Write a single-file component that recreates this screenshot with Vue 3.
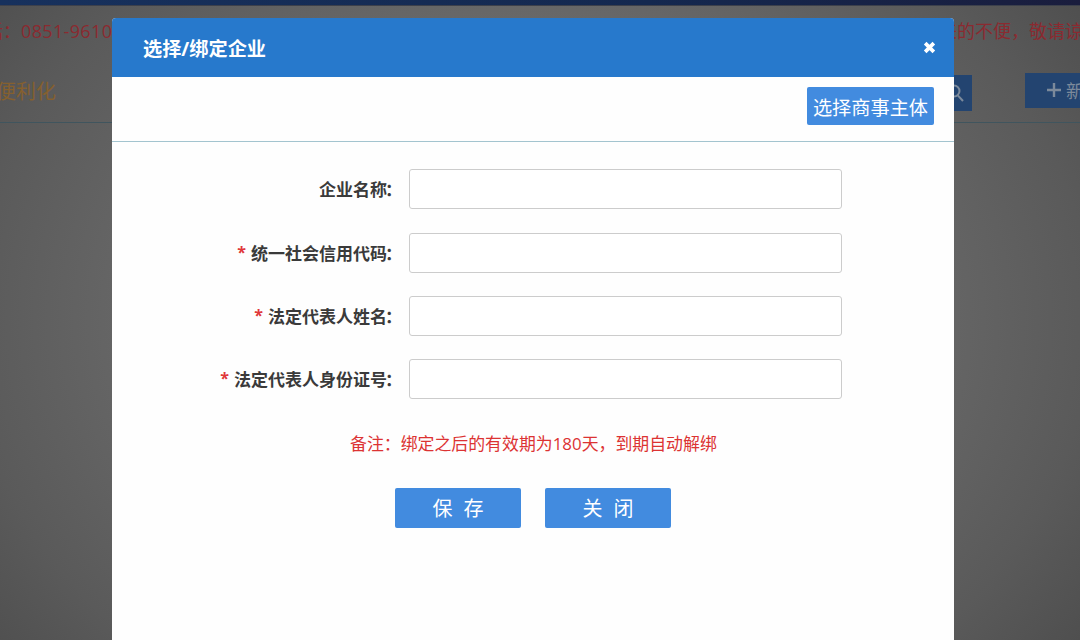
<script setup>
import { ref } from 'vue';

const campos = ref([
  { id: 'name', label: '企业名称', required: false, value: '' },
  { id: 'code', label: '统一社会信用代码', required: true, value: '' },
  { id: 'legal', label: '法定代表人姓名', required: true, value: '' },
  { id: 'idcard', label: '法定代表人身份证号', required: true, value: '' },
]);

const visible = ref(true);

const cerrar = () => {
  visible.value = false;
};
</script>

<template>
  <div class="screen">
    <div class="page">
      <div class="topbar"></div>
      <div class="columns notice">
        <span class="phone">话：<b>0851-9610</b></span>
        <span class="sorry">来的不便，敬请谅解</span>
      </div>
      <div class="columns toolbar">
        <span class="slogan">便利化</span>
        <div class="actions">
          <button class="search">
            <svg width="18" height="20" viewBox="0 0 18 20">
              <circle cx="7" cy="8" r="5.5" />
              <path d="M10.8 12.3L16 18" />
            </svg>
          </button>
          <button class="add">
            <svg width="16" height="16" viewBox="0 0 16 16"><path d="M8 1v14M1 8h14" /></svg>
            <span>新增</span>
          </button>
        </div>
      </div>
    </div>

    <div v-if="visible" class="modal">
      <div class="modal-head">
        <h3>选择/绑定企业</h3>
        <button class="close" @click="cerrar">
          <svg width="13" height="13" viewBox="0 0 12 12"><path d="M2 2l8 8M10 2l-8 8" /></svg>
        </button>
      </div>
      <div class="modal-tools">
        <button class="choose">选择商事主体</button>
      </div>
      <form class="form" @submit.prevent>
        <div v-for="campo in campos" :key="campo.id" class="row">
          <label :for="campo.id"><i v-if="campo.required">*</i>{{ campo.label }}<span class="colon">：</span></label>
          <input :id="campo.id" v-model="campo.value" type="text" />
        </div>
        <p class="remark">备注：绑定之后的有效期为180天，到期自动解绑</p>
        <div class="buttons">
          <button type="submit"><span>保</span><span>存</span></button>
          <button type="button" @click="cerrar"><span>关</span><span>闭</span></button>
        </div>
      </form>
    </div>
  </div>
</template>

<style>
body {
  margin: 0;
  overflow: hidden;
}
</style>

<style scoped>
.screen {
  position: relative;
  width: 1080px;
  height: 640px;
  overflow: hidden;
  font-family: "Open Sans", "Noto Sans CJK SC", sans-serif;
  background: radial-gradient(ellipse 720px 580px at 49% 50%, #707070 0%, #696969 50%, #5a5a5a 78%, #4b4b4b 100%);
}

button {
  display: flex;
  align-items: center;
  justify-content: center;
  padding: 0;
  border: 0;
  font-family: inherit;
  color: #fff;
  background: #428bdf;
  white-space: nowrap;
}

svg {
  fill: none;
  stroke: currentColor;
}

.topbar {
  height: 5px;
  background: linear-gradient(90deg, #17315d, #14284f 60%, #1a1d3d);
  border-bottom: 1px solid #3c404b;
}

.columns {
  display: grid;
  grid-template-columns: 112px 842px 126px;
  white-space: nowrap;
}

.notice {
  height: 48px;
  align-items: center;
  font-size: 18px;
  color: #8b2a30;
}

.phone {
  margin-left: -15px;
}

.phone b {
  font-weight: 400;
  letter-spacing: 0.35px;
}

.sorry {
  grid-column: 3;
  margin-left: -15px;
}

.toolbar {
  height: 68px;
  align-items: center;
  border-bottom: 1px solid #40555e;
}

.slogan {
  margin-left: -4px;
  padding-top: 4px;
  font-size: 20px;
  color: #85602f;
}

.actions {
  grid-column: 3;
  display: flex;
  gap: 53px;
  margin-left: -20px;
  padding-top: 5px;
}

.search,
.add {
  flex: none;
  color: #7c8a9b;
  background: #234470;
}

.search {
  width: 38px;
  height: 36px;
  margin-top: 4px;
}

.search svg {
  margin-left: 5px;
  stroke-width: 2;
}

.add {
  width: 98px;
  height: 35px;
  gap: 4px;
  margin-top: 2px;
  font-size: 18px;
}

.add svg {
  stroke-width: 2.4;
}

.modal {
  position: absolute;
  top: 18px;
  left: 112px;
  width: 842px;
  height: 640px;
  border-radius: 4px 4px 0 0;
  overflow: hidden;
  background: #fefefe;
}

.modal-head {
  display: flex;
  align-items: center;
  justify-content: space-between;
  height: 59px;
  padding: 0 18px 0 31px;
  color: #fff;
  background: #2779cc;
}

.modal-head h3 {
  margin: 2px 0 0;
  font-size: 19.2px;
  line-height: 28px;
}

.close {
  background: none;
}

.close svg {
  stroke-width: 3.4;
}

.modal-tools {
  display: flex;
  justify-content: flex-end;
  height: 64px;
  padding-right: 20px;
  border-bottom: 1px solid #a3c4cf;
}

.choose {
  width: 127px;
  height: 38px;
  margin-top: 10px;
  padding-top: 1px;
  box-sizing: border-box;
  border-radius: 2px;
  font-size: 19.2px;
}

.form {
  display: flex;
  flex-direction: column;
  gap: 23.3px;
  padding-top: 27.4px;
}

.row {
  display: flex;
  align-items: center;
  gap: 5px;
  height: 40px;
}

.row label {
  width: 292px;
  padding-bottom: 1px;
  text-align: right;
  font-size: 17px;
  font-weight: 700;
  color: #3a3a3a;
}

.row i {
  margin-right: 5px;
  font-size: 16px;
  font-style: normal;
  line-height: 1;
  vertical-align: 2px;
  color: #e0383a;
}

.colon {
  display: inline-block;
  width: 17px;
  text-align: left;
  text-indent: -2px;
}

.row input {
  box-sizing: border-box;
  width: 433px;
  height: 40px;
  padding: 0 10px;
  border: 1px solid #ccc;
  border-radius: 3px;
  font-size: 16px;
  background: #fff;
}

.remark {
  margin: 8px 0 0 238px;
  font-size: 16.9px;
  line-height: 25px;
  color: #dc3333;
}

.buttons {
  display: flex;
  gap: 24px;
  margin: 9px 0 0 283px;
}

.buttons button {
  width: 126px;
  height: 40px;
  gap: 11px;
  border-radius: 2px;
  font-size: 20px;
}
</style>
